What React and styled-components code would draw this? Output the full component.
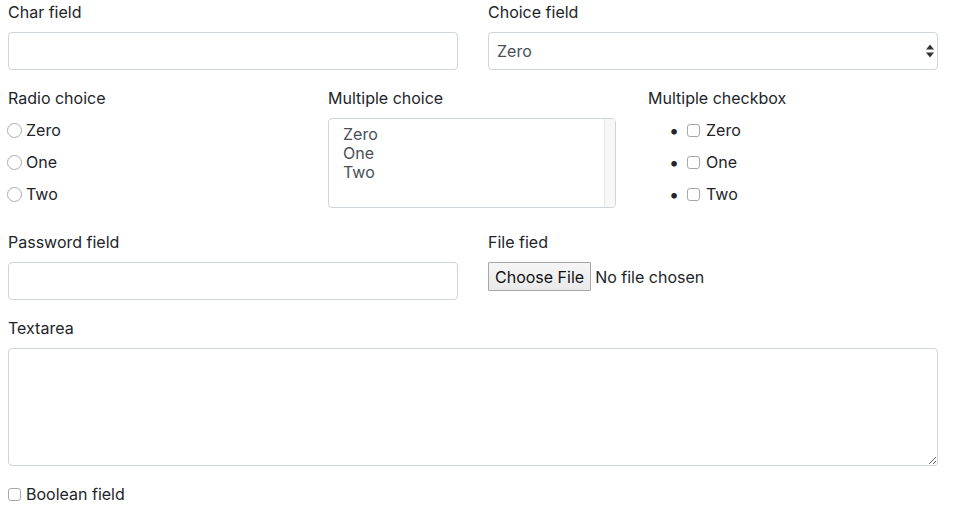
import styled, { createGlobalStyle } from "styled-components";

const Global = createGlobalStyle`
  body {
    margin: 0;
    background: #fff;
    font-family: Inter, "Liberation Sans", Arial, sans-serif;
    font-size: 16px;
    color: #212529;
  }
`;

const Form = styled.form`
  padding: 0 23px 0 8px;
`;

const Row = styled.div`
  display: grid;
  grid-template-columns: repeat(${(p) => p.cols || 1}, 1fr);
  column-gap: 30px;
`;

const Group = styled.div`
  margin-bottom: 16px;
`;

const Label = styled.label`
  display: block;
  line-height: 24px;
  margin-bottom: 8px;
`;

const Input = styled.input`
  display: block;
  box-sizing: border-box;
  width: 100%;
  height: 38px;
  padding: 6px 12px;
  border: 1px solid #ced4da;
  border-radius: 4px;
  font: inherit;
  color: #495057;
  outline: none;
`;

const SelectWrap = styled.div`
  position: relative;
`;

const Select = styled.select`
  display: block;
  box-sizing: border-box;
  width: 100%;
  height: 38px;
  padding: 6px 8px;
  border: 1px solid #ced4da;
  border-radius: 4px;
  background: #fff;
  font: inherit;
  color: #495057;
  appearance: none;
  outline: none;
`;

const Arrows = styled.svg`
  position: absolute;
  right: 3px;
  top: 12px;
  pointer-events: none;
`;

const ChoiceList = styled.div`
  margin: 0;
  padding: 0;
`;

const ChoiceItem = styled.label`
  display: flex;
  align-items: center;
  height: 24px;
  margin-bottom: 8px;
  padding-left: ${(p) => (p.indent ? "39px" : "0")};
  position: relative;

  &::before {
    content: ${(p) => (p.indent ? '"•"' : "none")};
    position: absolute;
    left: 21px;
    font-size: 18px;
  }
`;

const Radio = styled.input.attrs({ type: "radio" })`
  appearance: none;
  box-sizing: border-box;
  width: 15px;
  height: 15px;
  margin: 0 4px 0 -1px;
  border: 1px solid #ababab;
  border-radius: 50%;
  background: #fff;
`;

const Check = styled.input.attrs({ type: "checkbox" })`
  appearance: none;
  box-sizing: border-box;
  width: 13px;
  height: 13px;
  margin: 0 ${(p) => p.gap || 6}px 0 0;
  border: 1px solid #a8a8a8;
  border-radius: 3px;
  background: #fff;
`;

const ListBox = styled.div`
  display: flex;
  box-sizing: border-box;
  height: 90px;
  margin-right: 2px;
  border: 1px solid #ced4da;
  border-radius: 4px;
  overflow: hidden;
`;

const Options = styled.div`
  flex: 1;
  padding: 6px 14px;
  color: #495057;
  line-height: 19px;
`;

const Gutter = styled.div`
  width: 10px;
  background: #f7f7f7;
  border-left: 1px solid #e6e6e6;
`;

const FileRow = styled.div`
  display: flex;
  align-items: center;
  gap: 4px;
`;

const FileButton = styled.button`
  box-sizing: border-box;
  height: 29px;
  padding: 0 6px;
  border: 1px solid #a6a6a6;
  border-radius: 1px;
  background: linear-gradient(#f6f6f6, #e9e9e9);
  font: inherit;
  color: #111;
`;

const TextArea = styled.textarea`
  display: block;
  box-sizing: border-box;
  width: 100%;
  height: 118px;
  padding: 6px 12px;
  border: 1px solid #ced4da;
  border-radius: 4px;
  font: inherit;
  outline: none;
`;

const Bool = styled.label`
  display: flex;
  align-items: center;
  line-height: 24px;
`;

const opts = ["Zero", "One", "Two"];

export default function App() {
  return (
    <>
      <Global />
      <Form>
        <Row cols={2}>
          <Group>
            <Label>Char field</Label>
            <Input type="text" />
          </Group>
          <Group>
            <Label>Choice field</Label>
            <SelectWrap>
              <Select defaultValue="0">
                {opts.map((o, i) => (
                  <option key={o} value={i}>
                    {o}
                  </option>
                ))}
              </Select>
              <Arrows width="10" height="14" viewBox="0 0 10 14">
                <path d="M1 5.5 L5 0.5 L9 5.5 Z" fill="#333" />
                <path d="M1 8.5 L5 13.5 L9 8.5 Z" fill="#333" />
              </Arrows>
            </SelectWrap>
          </Group>
        </Row>
        <Row cols={3}>
          <Group>
            <Label>Radio choice</Label>
            <ChoiceList>
              {opts.map((o) => (
                <ChoiceItem key={o}>
                  <Radio name="radio" />
                  {o}
                </ChoiceItem>
              ))}
            </ChoiceList>
          </Group>
          <Group>
            <Label>Multiple choice</Label>
            <ListBox>
              <Options>
                {opts.map((o) => (
                  <div key={o}>{o}</div>
                ))}
              </Options>
              <Gutter />
            </ListBox>
          </Group>
          <Group>
            <Label>Multiple checkbox</Label>
            <ChoiceList>
              {opts.map((o) => (
                <ChoiceItem key={o} indent>
                  <Check gap={6} />
                  {o}
                </ChoiceItem>
              ))}
            </ChoiceList>
          </Group>
        </Row>
        <Row cols={2}>
          <Group>
            <Label>Password field</Label>
            <Input type="password" />
          </Group>
          <Group>
            <Label>File fied</Label>
            <FileRow>
              <FileButton type="button">Choose File</FileButton>
              <span>No file chosen</span>
            </FileRow>
          </Group>
        </Row>
        <Group>
          <Label>Textarea</Label>
          <TextArea />
        </Group>
        <Bool>
          <Check gap={5} />
          Boolean field
        </Bool>
      </Form>
    </>
  );
}
